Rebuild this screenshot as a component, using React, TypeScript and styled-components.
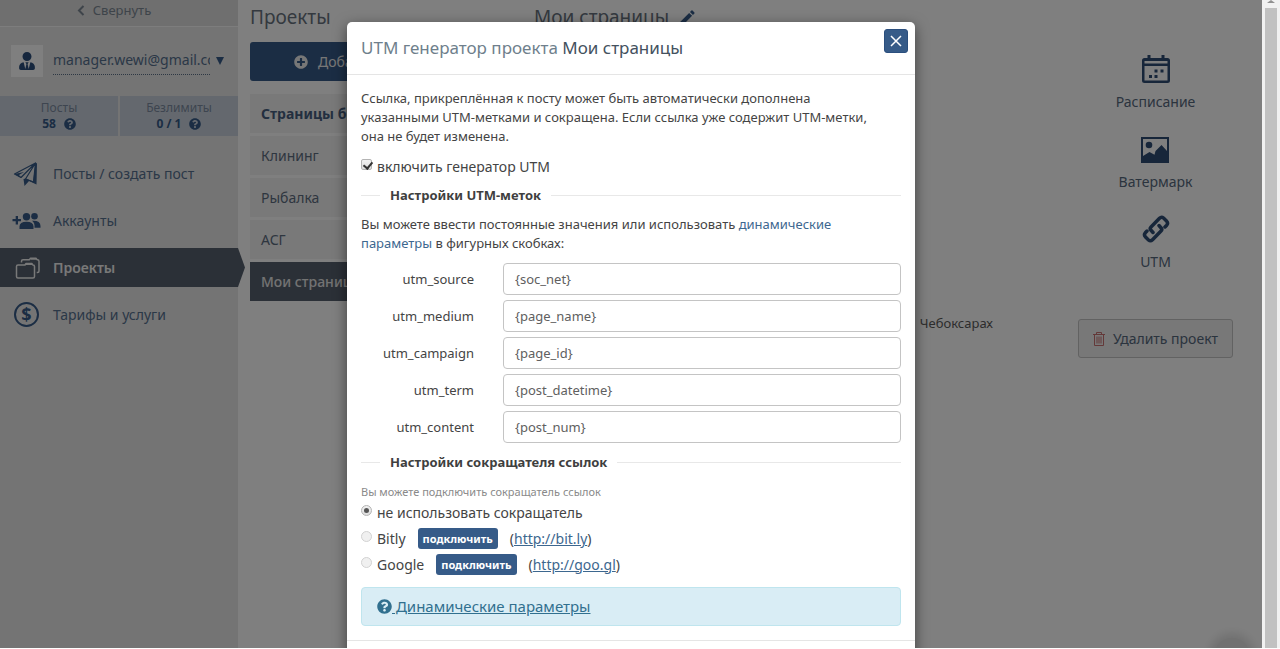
import React from 'react';
import styled, { createGlobalStyle } from 'styled-components';
import { FaPlusCircle, FaQuestionCircle, FaUserTie } from 'react-icons/fa';
import { MdModeEdit } from 'react-icons/md';

const navy = '#365b88';

const GlobalStyle = createGlobalStyle`
  * { box-sizing: border-box; }
  body {
    margin: 0;
    background: #fff;
    color: #444;
    font-family: "Noto Sans", "Open Sans", sans-serif;
    font-size: 14px;
    line-height: 19px;
  }
  button, input { font: inherit; }
  h1, h2, h3, p, ul, dl, dd, dt { margin: 0; padding: 0; font-weight: 400; }
`;

const Shell = styled.div`
  display: flex;
  height: 100vh;
  overflow: hidden;
  border-bottom: 1px solid #fff;
`;

const Stage = styled.div`
  position: relative;
  display: flex;
  flex: 1;
  min-width: 0;
  overflow: hidden;
`;

/* ---------- sidebar ---------- */

const Sidebar = styled.aside`
  position: relative;
  z-index: 1;
  flex: none;
  width: 238px;
  background: #e8e8e8;
  color: #5d7189;
`;

const Collapse = styled.button`
  display: flex;
  align-items: center;
  justify-content: center;
  gap: 8px;
  width: 100%;
  height: 27px;
  padding: 0 10px 6px 0;
  border: 0;
  border-bottom: 1px solid #fafafa;
  background: #dedede;
  color: #7c8894;
  font-size: 13px;
`;

const Account = styled.div`
  display: flex;
  align-items: center;
  height: 69px;
  padding: 0 14px 2px 11px;
  gap: 10px;
`;

const Avatar = styled.span`
  display: flex;
  flex: none;
  align-items: center;
  justify-content: center;
  width: 32px;
  height: 32px;
  background: #fff;
  color: #2d4f7c;
`;

const Email = styled.span`
  flex: 1;
  height: 28px;
  padding-top: 3px;
  overflow: hidden;
  white-space: nowrap;
  border-bottom: 1px dotted #5d7189;
  color: #56708f;
`;

const Caret = styled.span`
  width: 0;
  border: 4px solid transparent;
  border-top: 8px solid ${navy};
  border-bottom: 0;
  margin-left: -4px;
`;

const Stats = styled.dl`
  display: grid;
  grid-template-columns: 1fr 1fr;
  gap: 2px;
`;

const Stat = styled.div`
  height: 40px;
  padding-top: 4px;
  background: #c8d1dd;
  text-align: center;
  font-size: 12px;
  line-height: 16px;
  color: #7c8ba0;
  dd {
    display: flex;
    align-items: center;
    justify-content: center;
    gap: 8px;
    color: ${navy};
    font-weight: 700;
  }
`;

const Nav = styled.nav`
  display: flex;
  flex-direction: column;
  gap: 8px;
  padding-top: 18px;
`;

const NavItem = styled.a<{ $active?: boolean }>`
  display: flex;
  align-items: center;
  gap: 12px;
  height: 39px;
  padding-left: 12px;
  margin-right: ${p => (p.$active ? '-7px' : '0')};
  text-decoration: none;
  color: ${p => (p.$active ? '#f2f2f2' : '#56708f')};
  font-weight: ${p => (p.$active ? 600 : 400)};
  background: ${p => (p.$active ? '#56606e' : 'transparent')};
  clip-path: ${p => (p.$active ? 'polygon(0 0, calc(100% - 7px) 0, 100% 50%, calc(100% - 7px) 100%, 0 100%)' : 'none')};
`;

const NavIcon = styled.svg<{ $light?: boolean }>`
  flex: none;
  width: 29px;
  height: 28px;
  color: ${p => (p.$light ? '#f2f2f2' : navy)};
`;

const CoinIcon = styled.span`
  display: flex;
  align-items: center;
  justify-content: center;
  width: 25px;
  height: 25px;
  margin: 0 2px;
  border: 2px solid ${navy};
  border-radius: 50%;
  color: ${navy};
  font-weight: 700;
  font-size: 18px;
`;

/* ---------- page behind the dialog ---------- */

const Main = styled.main`
  display: grid;
  grid-template-columns: 270px 1fr 155px;
  column-gap: 14px;
  flex: 1;
  min-width: 0;
  padding: 5px 29px 0 12px;
`;

const PageTitle = styled.h2`
  display: flex;
  align-items: center;
  gap: 9px;
  height: 25px;
  font-size: 19px;
  line-height: 25px;
  color: #68737f;
  svg { color: ${navy}; }
`;

const AddButton = styled.button`
  display: flex;
  align-items: center;
  gap: 10px;
  width: 100%;
  height: 39px;
  margin: 12px 0 13px;
  padding: 0 44px;
  border: 0;
  border-radius: 3px;
  background: ${navy};
  color: #eee;
`;

const ProjectList = styled.ul`
  display: grid;
  gap: 3px;
  list-style: none;
`;

const Project = styled.li<{ $tone?: 'head' | 'active' }>`
  height: 39px;
  padding: 0 11px;
  line-height: 39px;
  white-space: nowrap;
  overflow: hidden;
  background: ${p => (p.$tone === 'active' ? '#56606e' : '#f2f2f2')};
  color: ${p => (p.$tone === 'active' ? '#e6e6e6' : p.$tone === 'head' ? '#475f80' : '#5d6d80')};
  font-weight: ${p => (p.$tone === 'head' ? 700 : p.$tone === 'active' ? 500 : 400)};
`;

const Details = styled.section`
  display: flex;
  flex-direction: column;
`;

const City = styled.p`
  margin-top: 284px;
  padding-right: 71px;
  text-align: right;
  font-size: 13px;
  color: #5a5a5a;
`;

const Tools = styled.aside`
  display: flex;
  flex-direction: column;
  align-items: center;
  padding-top: 50px;
`;

const Tool = styled.a`
  display: flex;
  flex-direction: column;
  align-items: center;
  gap: 9px;
  height: 80px;
  color: #56687d;
  text-decoration: none;
  svg { width: 28px; height: 28px; color: #2f4d75; }
`;

const DeleteButton = styled.button`
  display: flex;
  align-items: center;
  justify-content: center;
  gap: 8px;
  width: 100%;
  height: 39px;
  margin-top: 24px;
  padding: 0;
  border: 1px solid #c4c4c4;
  border-radius: 3px;
  background: #f0f0f0;
  color: #56687d;
  white-space: nowrap;
  svg { color: #c87070; }
`;

const ToTop = styled.button`
  position: absolute;
  right: 12px;
  bottom: -26px;
  width: 36px;
  height: 36px;
  border: 0;
  border-radius: 50%;
  background: #e2e2e2;
  box-shadow: 0 0 10px 5px #e2e2e2;
`;

/* ---------- dialog ---------- */

const Backdrop = styled.div`
  position: absolute;
  z-index: 2;
  inset: 0;
  display: flex;
  align-items: flex-start;
  justify-content: center;
  padding-top: 22px;
  background: rgba(0, 0, 0, 0.5);
`;

const Dialog = styled.section`
  width: 100%;
  max-width: 568px;
  border-radius: 5px;
  background: #fff;
  box-shadow: 0 4px 14px rgba(0, 0, 0, 0.5);
`;

const DialogHead = styled.header`
  display: flex;
  justify-content: space-between;
  align-items: flex-start;
  height: 53px;
  padding: 7px 7px 0 14px;
  border-bottom: 1px solid #e5e5e5;
`;

const DialogTitle = styled.h1`
  padding-top: 6px;
  font-size: 17px;
  line-height: 25px;
  color: #6f7f8c;
  span { color: #44515e; }
`;

const CloseButton = styled.button`
  display: flex;
  align-items: center;
  justify-content: center;
  width: 24px;
  height: 24px;
  padding: 0;
  border: 1px solid #2b4f7e;
  border-radius: 3px;
  background: ${navy};
  color: #fff;
`;

const DialogBody = styled.form`
  padding: 14px;
`;

const DialogFoot = styled.footer`
  height: 60px;
  border-top: 1px solid #e5e5e5;
`;

const Choice = styled.div`
  display: flex;
  align-items: center;
  height: 26px;
  label { margin-left: 5px; }
`;

const Tick = styled.input`
  appearance: none;
  position: relative;
  flex: none;
  width: 11px;
  height: 11px;
  margin: 0 0 4px;
  border: 1px solid #b4b4b4;
  border-radius: ${p => (p.type === 'radio' ? '50%' : '2px')};
  background: linear-gradient(#f1f1f1, #dedede);
  &:disabled { border-color: #d2d2d2; background: #f0f0f0; }
  &[type='radio']:checked::after {
    content: '';
    position: absolute;
    inset: 2px;
    border-radius: 50%;
    background: #555;
  }
  &[type='checkbox']:checked::after {
    content: '';
    position: absolute;
    left: 3px;
    top: 0;
    width: 4px;
    height: 7px;
    border: solid #333;
    border-width: 0 2px 2px 0;
    transform: rotate(40deg);
  }
`;

const GroupTitle = styled.h2`
  display: flex;
  align-items: center;
  gap: 10px;
  height: 19px;
  font-size: 13px;
  font-weight: 700;
  color: #3f3f3f;
  &::before { content: ''; width: 19px; height: 1px; background: #e8e8e8; }
  &::after { content: ''; flex: 1; height: 1px; background: #e8e8e8; }
`;

const Intro = styled.p`
  margin-bottom: 7px;
  padding-right: 12px;
  font-size: 13px;
`;

const UtmGroup = styled.section`
  padding: 7px 0 10px;
  font-size: 13px;
`;

const Hint = styled.p`
  margin: 10px 0;
  a { color: #3d678f; text-decoration: none; }
`;

const Fields = styled.div`
  display: grid;
  grid-template-columns: 113px 1fr;
  gap: 5px 29px;
  align-items: center;
  label { text-align: right; }
`;

const Field = styled.input`
  width: 100%;
  min-width: 0;
  height: 32px;
  padding: 0 11px;
  border: 1px solid #c4c4c4;
  border-radius: 4px;
  background: #fff;
  color: #606060;
`;

const Note = styled.p`
  margin-top: 13px;
  font-size: 11px;
  line-height: 14px;
  color: #8a8a8a;
`;

const Connect = styled.button`
  height: 21px;
  margin: 0 12px;
  padding: 0 5px;
  border: 0;
  border-radius: 3px;
  background: ${navy};
  color: #fff;
  font-size: 11px;
  line-height: 19px;
  font-weight: 700;
`;

const Ext = styled.a`
  color: #3d678f;
`;

const Info = styled.div`
  display: flex;
  align-items: center;
  height: 39px;
  margin-top: 10px;
  padding: 0 15px;
  border: 1px solid #bfe5ee;
  border-radius: 4px;
  background: #d9edf5;
  color: #31708f;
  font-size: 15px;
  a { color: #31708f; white-space: pre; }
`;

/* ---------- scrollbar strip ---------- */

const ScrollTrack = styled.div`
  display: flex;
  flex-direction: column;
  flex: none;
  width: 18px;
  padding: 0 3px;
  align-items: center;
  background: #f1f1f1;
  &::before {
    content: '';
    border: 4px solid transparent;
    border-top: 0;
    border-bottom: 3px solid #909090;
  }
`;

const ScrollThumb = styled.div`
  flex: 1;
  width: 12px;
  margin-top: 5px;
  background: #c1c1c1;
`;

const PlaneIcon = () => (
  <NavIcon viewBox="0 0 29 28" fill="none" stroke="currentColor" strokeLinejoin="round">
    <path d="M2.500 14 23.500 3 21.500 22 13.500 19 23.500 3 9 17.500z" strokeWidth="1.200" />
    <path d="M23.500 2.500 25 3.500 24.500 24.500 17 21 12.500 26 11.500 19 13.800 18.500 21.200 21.500z" fill="currentColor" stroke="none" />
    <path d="M2.500 14 12 12 7 15 9.500 18z" fill="currentColor" stroke="none" />
  </NavIcon>
);

const GroupIcon = () => (
  <NavIcon viewBox="0 0 29 28" fill="currentColor">
    <path d="M0.500 12h3.200V9h2.300v3H9v2.300H6v3.200H3.700v-3.200H.5z" />
    <circle cx="14.500" cy="9.800" r="3.700" />
    <circle cx="22.500" cy="9.300" r="3.300" />
    <path d="M7.500 22v-2.500q0-4.800 7-4.800t7 4.800v2.500z" />
    <path d="M20 13.800q8.500-.5 8.500 5.200v1.800h-6q.5-4.800-2.500-7z" />
  </NavIcon>
);

const FoldersIcon = () => (
  <NavIcon $light viewBox="0 0 29 28" fill="none" stroke="currentColor" strokeWidth="1.500" strokeLinejoin="round">
    <path d="M6 11h7l1-1.500h6l.8 1.500h.2a1.500 1.500 0 0 1 1.500 1.500v10a1.500 1.500 0 0 1-1.500 1.500H6a1.500 1.500 0 0 1-1.500-1.500v-10A1.500 1.500 0 0 1 6 11z" />
    <path d="M9.500 8.500V7.200A1.500 1.500 0 0 1 11 5.700h6.500l1-1.500h5.500l1 1.500h.5A1.500 1.500 0 0 1 27 7.200v9.800a1.500 1.500 0 0 1-1.500 1.500h-.8" />
    <path d="M14 10.200h6M18.500 5h6" />
  </NavIcon>
);

const CalendarIcon = () => (
  <svg viewBox="0 0 28 28" fill="currentColor" aria-hidden="true">
    <path fillRule="evenodd" d="M2.500 3h23A2.500 2.500 0 0 1 28 5.500v20a2.500 2.500 0 0 1-2.500 2.500h-23A2.500 2.500 0 0 1 0 25.500v-20A2.500 2.500 0 0 1 2.500 3zM2.500 6v2.500h23V6zm0 5v14.500h23V11z" />
    <path d="M5.500 0h3v4h-3zM19.500 0h3v4h-3zM12.500 14.500h3v3h-3zM18.500 14.500h3v3h-3zM7 20h3v3H7zM12.500 20h3v3h-3z" />
  </svg>
);

const PictureIcon = () => (
  <svg viewBox="0 0 28 28" fill="currentColor" aria-hidden="true">
    <path fillRule="evenodd" d="M0 2h28v26H0zm2 2v17l6.500-4 5 2.800L14.500 16 20.500 10 26 16V4z" />
    <circle cx="8" cy="10" r="3.300" />
  </svg>
);

const ChainIcon = () => (
  <svg viewBox="0 0 28 28" fill="none" stroke="currentColor" strokeWidth="3.500" strokeLinecap="round" strokeLinejoin="round" aria-hidden="true">
    <path d="M11 17.500 8.800 15Q7.500 13.500 9 12L17.500 3.300Q19.500 1.300 21.500 3L24.500 6Q26.500 8 24.700 10.200L23 12" />
    <path d="M17 10.500 19.200 13Q20.500 14.500 19 16L10.500 24.700Q8.500 26.700 6.500 25L3.500 22Q1.500 20 3.300 17.800L5 16" />
  </svg>
);

const TrashIcon = () => (
  <svg width="12" height="16" viewBox="0 0 12 16" fill="none" stroke="currentColor" aria-hidden="true">
    <path d="M0 3.500h12M3.500 3V1.500h5V3M1.500 3.500v11h9v-11M4 5.500v7M6 5.500v7M8 5.500v7" />
  </svg>
);

const utmFields: [string, string][] = [
  ['utm_source', '{soc_net}'],
  ['utm_medium', '{page_name}'],
  ['utm_campaign', '{page_id}'],
  ['utm_term', '{post_datetime}'],
  ['utm_content', '{post_num}'],
];

const shorteners = [
  { id: 'bitly', name: 'Bitly', url: 'http://bit.ly' },
  { id: 'google', name: 'Google', url: 'http://goo.gl' },
];

export default function App() {
  return (
    <Shell>
      <GlobalStyle />
      <Stage>
        <Sidebar>
          <Collapse type="button">
            <svg width="8" height="11" viewBox="0 0 8 11" fill="none" stroke="currentColor" strokeWidth="2">
              <path d="M6.500 1 2 5.500 6.500 10" />
            </svg>
            Свернуть
          </Collapse>
          <Account>
            <Avatar><FaUserTie size={18} /></Avatar>
            <Email>manager.wewi@gmail.com</Email>
            <Caret />
          </Account>
          <Stats>
            <Stat>
              <dt>Посты</dt>
              <dd>58 <FaQuestionCircle size={12} /></dd>
            </Stat>
            <Stat>
              <dt>Безлимиты</dt>
              <dd>0 / 1 <FaQuestionCircle size={12} /></dd>
            </Stat>
          </Stats>
          <Nav>
            <NavItem href="#posts"><PlaneIcon />Посты / создать пост</NavItem>
            <NavItem href="#accounts"><GroupIcon />Аккаунты</NavItem>
            <NavItem href="#projects" $active><FoldersIcon />Проекты</NavItem>
            <NavItem href="#rates"><CoinIcon>$</CoinIcon>Тарифы и услуги</NavItem>
          </Nav>
        </Sidebar>

        <Main>
          <section>
            <PageTitle>Проекты</PageTitle>
            <AddButton type="button"><FaPlusCircle size={14} />Добавить</AddButton>
            <ProjectList>
              <Project $tone="head">Страницы без проекта</Project>
              <Project>Клининг</Project>
              <Project>Рыбалка</Project>
              <Project>АСГ</Project>
              <Project $tone="active">Мои страницы</Project>
            </ProjectList>
          </section>
          <Details>
            <PageTitle>Мои страницы <MdModeEdit size={19} /></PageTitle>
            <City>Чебоксарах</City>
          </Details>
          <Tools>
            <Tool href="#schedule"><CalendarIcon />Расписание</Tool>
            <Tool href="#watermark"><PictureIcon />Ватермарк</Tool>
            <Tool href="#utm"><ChainIcon />UTM</Tool>
            <DeleteButton type="button"><TrashIcon />Удалить проект</DeleteButton>
          </Tools>
        </Main>
        <ToTop type="button" aria-label="Наверх" />

        <Backdrop>
          <Dialog role="dialog" aria-labelledby="dialog-title">
            <DialogHead>
              <DialogTitle id="dialog-title">UTM генератор проекта <span>Мои страницы</span></DialogTitle>
              <CloseButton type="button" aria-label="Закрыть">
                <svg width="12" height="12" viewBox="0 0 12 12" stroke="currentColor" strokeWidth="1.500">
                  <path d="M1 1 11 11M11 1 1 11" />
                </svg>
              </CloseButton>
            </DialogHead>
            <DialogBody>
              <Intro>
                Ссылка, прикреплённая к посту может быть автоматически дополнена указанными UTM-метками и сокращена. Если ссылка уже содержит UTM-метки, она не будет изменена.
              </Intro>
              <Choice>
                <Tick type="checkbox" id="enable" defaultChecked />
                <label htmlFor="enable">включить генератор UTM</label>
              </Choice>
              <UtmGroup>
                <GroupTitle>Настройки UTM-меток</GroupTitle>
                <Hint>
                  Вы можете ввести постоянные значения или использовать <a href="#dynamic">динамические параметры</a> в фигурных скобках:
                </Hint>
                <Fields>
                  {utmFields.map(([name, value]) => (
                    <React.Fragment key={name}>
                      <label htmlFor={name}>{name}</label>
                      <Field id={name} defaultValue={value} />
                    </React.Fragment>
                  ))}
                </Fields>
              </UtmGroup>
              <GroupTitle>Настройки сокращателя ссылок</GroupTitle>
              <Note>Вы можете подключить сокращатель ссылок</Note>
              <Choice>
                <Tick type="radio" name="shortener" id="none" defaultChecked />
                <label htmlFor="none">не использовать сокращатель</label>
              </Choice>
              {shorteners.map(s => (
                <Choice key={s.id}>
                  <Tick type="radio" name="shortener" id={s.id} disabled />
                  <label htmlFor={s.id}>{s.name}</label>
                  <Connect type="button">подключить</Connect>
                  <span>(<Ext href={s.url}>{s.url}</Ext>)</span>
                </Choice>
              ))}
              <Info>
                <FaQuestionCircle size={15} />
                <a href="#dynamic"> Динамические параметры</a>
              </Info>
            </DialogBody>
            <DialogFoot />
          </Dialog>
        </Backdrop>
      </Stage>
      <ScrollTrack><ScrollThumb /></ScrollTrack>
    </Shell>
  );
}
